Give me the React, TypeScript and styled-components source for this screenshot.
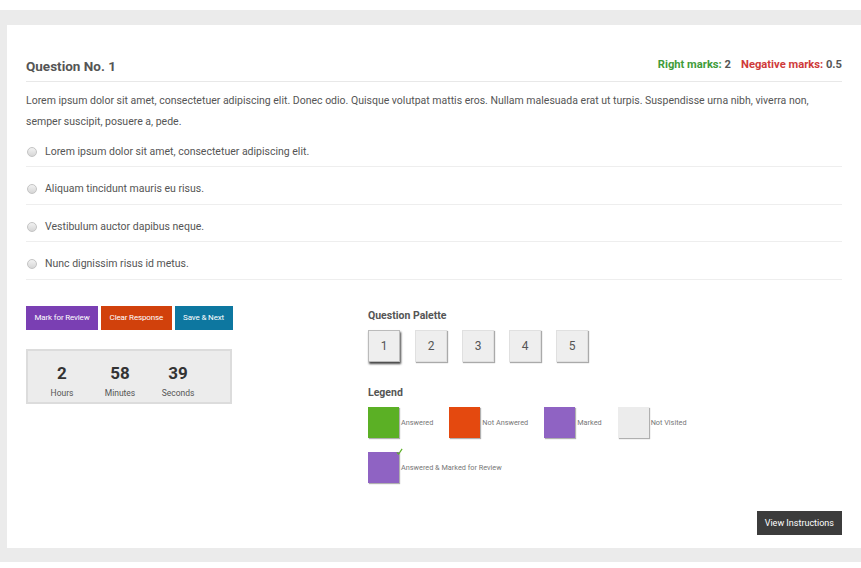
import React from 'react'
import styled, { createGlobalStyle } from 'styled-components'

const GlobalStyle = createGlobalStyle`
  body {
    margin: 0;
    background: #fff;
    font-family: Roboto, "Liberation Sans", Arial, sans-serif;
    color: #555;
  }
`

const options = [
  'Lorem ipsum dolor sit amet, consectetuer adipiscing elit.',
  'Aliquam tincidunt mauris eu risus.',
  'Vestibulum auctor dapibus neque.',
  'Nunc dignissim risus id metus.',
]

const legend = [
  { color: '#5bb025', label: 'Answered' },
  { color: '#e4490f', label: 'Not Answered' },
  { color: '#8f63c3', label: 'Marked' },
  { color: '#ececec', label: 'Not Visited' },
]

const App = () => {
  return (
    <>
      <GlobalStyle />
      <Frame>
        <Panel>
          <Header>
            <Title>Question No. 1</Title>
            <Marks>
              <Mark tone="#3f9c3a">Right marks:</Mark> 2
              <Mark tone="#cf3a3a" style={{ marginLeft: 10 }}>Negative marks:</Mark> 0.5
            </Marks>
          </Header>
          <QuestionText>
            Lorem ipsum dolor sit amet, consectetuer adipiscing elit. Donec odio. Quisque volutpat mattis eros. Nullam malesuada erat ut turpis. Suspendisse urna nibh, viverra non, semper suscipit, posuere a, pede.
          </QuestionText>
          <Options>
            {options.map(o => (
              <Option key={o}>
                <Radio />
                {o}
              </Option>
            ))}
          </Options>

          <Bottom>
            <div>
              <Actions>
                <ActionButton bg="#7a3fb3">Mark for Review</ActionButton>
                <ActionButton bg="#d1410c">Clear Response</ActionButton>
                <ActionButton bg="#0d77a0">Save &amp; Next</ActionButton>
              </Actions>
              <Timer>
                <TimeUnit>
                  <TimeValue>2</TimeValue>
                  <TimeLabel>Hours</TimeLabel>
                </TimeUnit>
                <TimeUnit>
                  <TimeValue>58</TimeValue>
                  <TimeLabel>Minutes</TimeLabel>
                </TimeUnit>
                <TimeUnit>
                  <TimeValue>39</TimeValue>
                  <TimeLabel>Seconds</TimeLabel>
                </TimeUnit>
              </Timer>
            </div>

            <div>
              <SectionTitle>Question Palette</SectionTitle>
              <Palette>
                {[1, 2, 3, 4, 5].map(n => (
                  <PaletteButton key={n} current={n === 1}>{n}</PaletteButton>
                ))}
              </Palette>

              <SectionTitle style={{ marginTop: 24 }}>Legend</SectionTitle>
              <LegendRow>
                {legend.map(l => (
                  <LegendItem key={l.label}>
                    <Swatch color={l.color} />
                    <LegendLabel>{l.label}</LegendLabel>
                  </LegendItem>
                ))}
              </LegendRow>
              <LegendRow>
                <LegendItem>
                  <Swatch color="#8f63c3">
                    <Tick viewBox="0 0 8 8">
                      <path d="M1 5 L3 7 L7 1" fill="none" stroke="#5bb025" strokeWidth="1.3" />
                    </Tick>
                  </Swatch>
                  <LegendLabel>Answered &amp; Marked for Review</LegendLabel>
                </LegendItem>
              </LegendRow>
            </div>
          </Bottom>

          <Footer>
            <DarkButton>View Instructions</DarkButton>
          </Footer>
        </Panel>
      </Frame>
    </>
  )
}

export default App

const Frame = styled.div`
  margin-top: 10px;
  background: #ebebeb;
  padding: 15px 0 14px 7px;
`

const Panel = styled.div`
  background: #fff;
  padding: 31px 19px 13px 19px;
`

const Header = styled.div`
  display: flex;
  justify-content: space-between;
  align-items: center;
  padding-bottom: 5px;
  border-bottom: 1px solid #e8e8e8;
`

const Title = styled.h2`
  margin: 0;
  font-size: 13.5px;
  line-height: 20px;
  font-weight: 700;
  color: #555;
`

const Marks = styled.div`
  font-size: 11.2px;
  font-weight: 700;
  color: #555;
  line-height: 16px;
  margin-bottom: 3px;
`

const Mark = styled.span<{ tone: string }>`
  color: ${p => p.tone};
`

const QuestionText = styled.p`
  margin: 8px 0 0;
  font-size: 10.5px;
  line-height: 21px;
  color: #555;
`

const Options = styled.div`
  display: flex;
  flex-direction: column;
`

const Option = styled.div`
  display: flex;
  align-items: center;
  gap: 8px;
  padding: 13px 0 5.5px 1px;
  line-height: 18px;
  font-size: 10.5px;
  color: #555;
  border-bottom: 1px solid #eee;
  &:first-child {
    padding-top: 10.5px;
  }
`

const Radio = styled.span`
  width: 8px;
  height: 8px;
  border-radius: 50%;
  border: 1px solid #c4c4c4;
  background: linear-gradient(#f2f2f2, #d6d6d6);
`

const Bottom = styled.div`
  display: grid;
  grid-template-columns: 342px 1fr;
  margin-top: 26px;
`

const Actions = styled.div`
  display: flex;
  gap: 3px;
`

const ActionButton = styled.button<{ bg: string }>`
  height: 24px;
  border: none;
  padding: 0 8.5px;
  background: ${p => p.bg};
  color: #fff;
  font-family: Roboto, "Liberation Sans", Arial, sans-serif;
  font-size: 8px;
  letter-spacing: -0.15px;
`

const Timer = styled.div`
  margin-top: 19px;
  width: 194px;
  height: 51px;
  background: #ececec;
  border: 2px solid #dcdcdc;
  display: flex;
  gap: 6px;
  padding-left: 8px;
  box-sizing: content-box;
`

const TimeUnit = styled.div`
  width: 52px;
  text-align: center;
  padding-top: 12px;
`

const TimeValue = styled.div`
  font-size: 17px;
  font-weight: 700;
  line-height: 20px;
  color: #333;
`

const TimeLabel = styled.div`
  font-size: 8.5px;
  line-height: 12px;
  margin-top: 4px;
  color: #555;
`

const SectionTitle = styled.h4`
  margin: 3px 0 0;
  font-size: 10.5px;
  line-height: 14px;
  font-weight: 700;
  color: #555;
`

const Palette = styled.div`
  display: flex;
  gap: 15px;
  margin-top: 7px;
`

const PaletteButton = styled.button<{ current?: boolean }>`
  width: 32px;
  height: 32px;
  padding: 0;
  border: 1px solid ${p => (p.current ? '#bbb' : '#e0e0e0')};
  background: #eee;
  color: #555;
  font-family: Roboto, "Liberation Sans", Arial, sans-serif;
  font-size: 12px;
  box-shadow: ${p => (p.current ? '1px 2px 2px #444' : '1px 1px 1px #aaa')};
`

const LegendRow = styled.div`
  display: flex;
  gap: 16px;
  margin-top: 7px;
  & + & {
    margin-top: 14px;
  }
`

const LegendItem = styled.div`
  display: flex;
  align-items: center;
  gap: 2px;
`

const Swatch = styled.div<{ color: string }>`
  position: relative;
  width: 31px;
  height: 31px;
  background: ${p => p.color};
  box-shadow: 1px 1px 1px #b0b0b0;
`

const Tick = styled.svg`
  position: absolute;
  top: -4px;
  right: -4px;
  width: 7px;
  height: 7px;
`

const LegendLabel = styled.span`
  font-size: 7.3px;
  color: #777;
`

const Footer = styled.div`
  display: flex;
  justify-content: flex-end;
  margin-top: 28px;
`

const DarkButton = styled.button`
  height: 24px;
  padding: 0 8px;
  border: none;
  background: #3c3c3c;
  color: #fff;
  font-family: Roboto, "Liberation Sans", Arial, sans-serif;
  font-size: 9px;
`
